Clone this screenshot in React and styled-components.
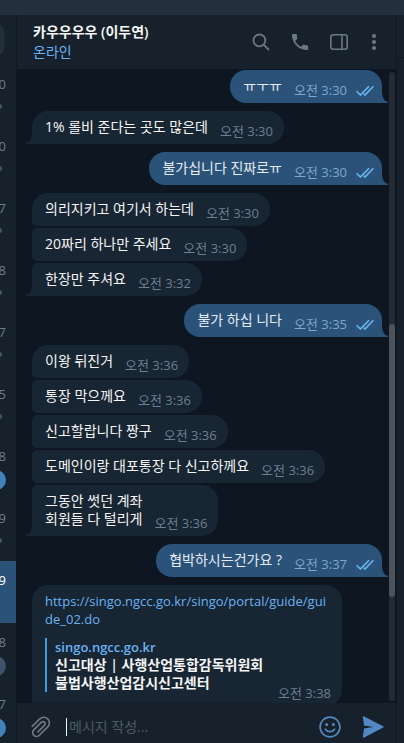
import React from 'react';
import styled, { createGlobalStyle } from 'styled-components';

const GlobalStyle = createGlobalStyle`
  * {
    box-sizing: border-box;
  }
  body {
    margin: 0;
    background: #0e1621;
    color: #f5f5f5;
    font: 14px/18px 'Open Sans', 'Noto Sans CJK KR', sans-serif;
  }
  button {
    display: flex;
    padding: 0;
    border: 0;
    background: none;
    color: inherit;
    cursor: pointer;
  }
  svg {
    display: block;
  }
`;

const Window = styled.div`
  display: flex;
  flex-direction: column;
  height: 100vh;
  overflow: hidden;
`;

const TitleBar = styled.div`
  flex: none;
  height: 15px;
  background: #242f3d;
`;

const Columns = styled.div`
  display: flex;
  flex: 1;
  min-height: 0;
`;

const Sidebar = styled.aside`
  flex: none;
  width: 17px;
  overflow: hidden;
  background: #17212b;
  border-right: 1px solid #101921;
`;

const SearchArea = styled.div`
  display: flex;
  align-items: center;
  height: 50px;
`;

const SearchEdge = styled.div`
  width: 5px;
  height: 30px;
  border-radius: 0 5px 5px 0 / 0 15px 15px 0;
  background: #242f3d;
`;

const DialogRow = styled.div`
  display: flex;
  flex-direction: column;
  align-items: flex-end;
  gap: 5px;
  height: 62px;
  padding: 10px 10px 0 0;
  background: ${props => (props.$active ? '#2b5278' : 'transparent')};
  color: ${props => (props.$active ? '#ffffff' : '#6d7f8f')};
  font-size: 13px;
`;

const Pin = styled.span`
  width: 5px;
  height: 5px;
  margin: 6px 4px 0 0;
  border-radius: 50%;
  background: #455769;
`;

const Badge = styled.span`
  flex: none;
  width: 20px;
  height: 20px;
  border-radius: 10px;
  background: ${props => (props.$muted ? '#3e546a' : '#4082bc')};
`;

const Chat = styled.main`
  display: flex;
  flex: 1;
  flex-direction: column;
  min-width: 0;
`;

const Header = styled.header`
  display: flex;
  flex: none;
  align-items: center;
  justify-content: space-between;
  height: 54px;
  padding: 0 17px 0 16px;
  background: #17212b;
`;

const Name = styled.div`
  font-weight: 600;
`;

const Status = styled.div`
  padding-top: 2px;
  color: #6ab3f3;
`;

const Actions = styled.div`
  display: flex;
  align-items: center;
  gap: 21px;
  color: #6c7883;
`;

const History = styled.div`
  display: flex;
  flex: 1;
  min-height: 0;
  padding-right: 1px;
`;

const Messages = styled.div`
  display: flex;
  flex: 1;
  flex-direction: column;
  gap: 8px;
  min-width: 0;
  padding: 1px 7px 0 15px;
  overflow: hidden;
`;

const Group = styled.div`
  display: flex;
  flex-direction: column;
  flex: none;
  align-items: ${props => (props.$out ? 'flex-end' : 'flex-start')};
  gap: 2px;
`;

const Bubble = styled.div`
  position: relative;
  display: flex;
  flex-direction: ${props => (props.$stacked ? 'column' : 'row')};
  align-items: flex-end;
  gap: ${props => (props.$stacked ? '0' : '12px')};
  max-width: 310px;
  padding: ${props => (props.$out ? '7px 8px 4px 13px' : '7px 11px 4px 13px')};
  border-radius: ${props =>
    props.$out
      ? '16px 16px 0 16px'
      : `${props.$first ? 16 : 5}px 16px 16px ${props.$last ? 0 : 5}px`};
  background: ${props => (props.$out ? '#2b5278' : '#182533')};
  color: ${props => (props.$out ? '#e4ecf2' : '#f5f5f5')};
`;

const TailShape = styled.svg`
  position: absolute;
  bottom: 0;
  ${props => (props.$out ? 'left: 100%;' : 'right: 100%; transform: scaleX(-1);')}
  fill: ${props => (props.$out ? '#2b5278' : '#182533')};
`;

const Text = styled.div`
  padding-bottom: 4px;
  white-space: pre-line;
`;

const Meta = styled.div`
  display: flex;
  flex: none;
  align-items: center;
  gap: 9px;
  margin-top: ${props => (props.$overlap ? '-8px' : '0')};
  color: ${props => (props.$out ? '#7da8d3' : '#6d7f8f')};
  font-size: 13px;
`;

const Link = styled.a`
  align-self: stretch;
  color: #6ab3f3;
  font-size: 13px;
  text-decoration: none;
  word-break: break-all;
`;

const Preview = styled.div`
  align-self: stretch;
  margin-top: 10px;
  padding-left: 8px;
  border-left: 2px solid #429bdb;
  font-weight: 600;
`;

const Site = styled.div`
  color: #6ab3f3;
  font-size: 13px;
`;

const Track = styled.div`
  flex: none;
  width: 6px;
  margin: 3px 0 2px;
  border-radius: 3px;
  background: #242b35;
`;

const Thumb = styled.div`
  position: relative;
  top: 40%;
  height: 43.5%;
  border-radius: 3px;
  background: #4d535b;
`;

const Composer = styled.form`
  display: flex;
  flex: none;
  align-items: center;
  height: 40px;
  padding: 8px 12px 0 13px;
  background: #17212b;
  color: #6c7883;
`;

const MessageInput = styled.input`
  flex: 1;
  min-width: 0;
  height: 18px;
  margin: 0 16px 0 14px;
  padding: 0 0 0 2px;
  border: 0;
  border-left: 1px solid #f5f5f5;
  outline: 0;
  background: none;
  color: #f5f5f5;
  font: inherit;
  &::placeholder {
    color: #4e5a66;
    opacity: 1;
  }
`;

const ComposerActions = styled.div`
  display: flex;
  align-items: center;
  gap: 21px;
  color: #5288c1;
`;

const SidePanel = styled.aside`
  flex: none;
  width: 8px;
  border-left: 1px solid #101921;
  background: #17212b;
`;

const PanelHeader = styled.div`
  height: 43px;
  border-bottom: 1px solid #101921;
`;

const dialogs = [
  { time: '0' },
  { time: '0' },
  { time: '7' },
  { time: '8' },
  { time: '7' },
  { time: '5' },
  { time: '8', badge: true },
  { time: '9' },
  { time: '9', active: true },
  { time: '8', badge: true, muted: true },
  { time: '7', badge: true },
];

const groups = [
  { out: true, items: [['ㅠㅜㅠ', '3:30']] },
  { items: [['1% 롤비 준다는 곳도 많은데', '3:30']] },
  { out: true, items: [['불가십니다 진짜로ㅠ', '3:30']] },
  {
    items: [
      ['의리지키고 여기서 하는데', '3:30'],
      ['20짜리 하나만 주세요', '3:30'],
      ['한장만 주셔요', '3:32'],
    ],
  },
  { out: true, items: [['불가 하십 니다', '3:35']] },
  {
    items: [
      ['이왕 뒤진거', '3:36'],
      ['통장 막으께요', '3:36'],
      ['신고할랍니다 짱구', '3:36'],
      ['도메인이랑 대포통장 다 신고하께요', '3:36'],
      ['그동안 썻던 계좌\n회원들 다 털리게', '3:36'],
    ],
  },
  { out: true, items: [['협박하시는건가요 ?', '3:37']] },
];

const Tail = ({ out }) => (
  <TailShape $out={out} width="6" height="12" viewBox="0 0 6 12" aria-hidden="true">
    <path d="M0 0 C0 6 2 10 6 11 V12 H0 Z" />
  </TailShape>
);

const Checks = () => (
  <svg width="18" height="11" viewBox="0 0 18 11" fill="none" stroke="#6ab8f3" strokeWidth="1.6" aria-hidden="true">
    <path d="M.6 6.2 4.4 10 13 1.2" />
    <path d="M7.6 8.6 9 10 17.4 1.2" />
  </svg>
);

const Message = ({ text, time, out, first, last }) => (
  <Bubble $out={out} $first={first} $last={last}>
    <Text>{text}</Text>
    <Meta $out={out}>
      <span>오전 {time}</span>
      {out && <Checks />}
    </Meta>
    {last && <Tail out={out} />}
  </Bubble>
);

const App = () => {
  return (
    <>
      <GlobalStyle />
      <Window>
        <TitleBar />
        <Columns>
          <Sidebar>
            <SearchArea>
              <SearchEdge />
            </SearchArea>
            {dialogs.map((dialog, i) => (
              <DialogRow key={i} $active={dialog.active}>
                <span>{dialog.time}</span>
                {dialog.badge && <Badge $muted={dialog.muted} />}
                {!dialog.badge && !dialog.active && <Pin />}
              </DialogRow>
            ))}
          </Sidebar>

          <Chat>
            <Header>
              <div>
                <Name>카우우우우 (이두연)</Name>
                <Status>온라인</Status>
              </div>
              <Actions>
                <button type="button" aria-label="검색">
                  <svg width="18" height="18" viewBox="0 0 18 18" fill="none" stroke="currentColor" strokeWidth="1.8">
                    <circle cx="7.4" cy="7.4" r="5.9" />
                    <path d="M11.6 11.6 17 17" />
                  </svg>
                </button>
                <button type="button" aria-label="전화">
                  <svg width="18" height="18" viewBox="2 2 20 20" fill="currentColor">
                    <path d="M6.62 10.79c1.44 2.83 3.76 5.14 6.59 6.59l2.2-2.2c.27-.27.67-.36 1.02-.24 1.12.37 2.33.57 3.57.57.55 0 1 .45 1 1V20c0 .55-.45 1-1 1C10.61 21 3 13.39 3 4c0-.55.45-1 1-1h3.5c.55 0 1 .45 1 1 0 1.25.2 2.45.57 3.57.11.35.03.74-.25 1.02z" />
                  </svg>
                </button>
                <button type="button" aria-label="정보 패널">
                  <svg width="18" height="16" viewBox="0 0 18 16" fill="none" stroke="currentColor" strokeWidth="1.6">
                    <rect x=".8" y=".8" width="16.4" height="14.4" rx="2.4" />
                    <path d="M12 1v14" />
                  </svg>
                </button>
                <button type="button" aria-label="메뉴">
                  <svg width="10" height="18" viewBox="0 0 10 18" fill="currentColor">
                    <circle cx="5" cy="3" r="2.1" />
                    <circle cx="5" cy="9" r="2.1" />
                    <circle cx="5" cy="15" r="2.1" />
                  </svg>
                </button>
              </Actions>
            </Header>

            <History>
              <Messages>
                {groups.map((group, i) => (
                  <Group key={i} $out={group.out}>
                    {group.items.map(([text, time], j) => (
                      <Message
                        key={text}
                        text={text}
                        time={time}
                        out={group.out}
                        first={j === 0}
                        last={j === group.items.length - 1}
                      />
                    ))}
                  </Group>
                ))}
                <Group>
                  <Bubble $first $stacked>
                    <Link href="https://singo.ngcc.go.kr/singo/portal/guide/guide_02.do">
                      https://singo.ngcc.go.kr/singo/portal/guide/guide_02.do
                    </Link>
                    <Preview>
                      <Site>singo.ngcc.go.kr</Site>
                      <div>신고대상 | 사행산업통합감독위원회</div>
                      <div>불법사행산업감시신고센터</div>
                    </Preview>
                    <Meta $overlap>
                      <span>오전 3:38</span>
                    </Meta>
                  </Bubble>
                </Group>
              </Messages>
              <Track>
                <Thumb />
              </Track>
            </History>

            <Composer onSubmit={e => e.preventDefault()}>
              <button type="button" aria-label="파일 첨부">
                <svg width="22" height="22" viewBox="0 0 22 22" fill="none" stroke="currentColor" strokeWidth="1.7" strokeLinecap="round">
                  <path d="M2.2 10.4 9 3.6c2.6-2.6 6.3-2.9 8.7-.7 2.4 2.3 2.2 5.8-.2 8.2l-7.9 7.9c-1.7 1.700-4.2 1.800-5.800.3-1.600-1.600-1.500-4 .2-5.700l7.300-7.300c.9-.9 2.300-1 3.200-.1.9.9.8 2.200-.1 3.100l-6.500 6.500" />
                </svg>
              </button>
              <MessageInput type="text" aria-label="메시지" placeholder="메시지 작성..." />
              <ComposerActions>
                <button type="button" aria-label="이모티콘">
                  <svg width="22" height="22" viewBox="0 0 22 22" fill="none" stroke="currentColor" strokeWidth="1.7" strokeLinecap="round">
                    <circle cx="11" cy="11" r="9.9" />
                    <path d="M6.4 13.2c1.9 3.1 7.3 3.1 9.2 0" />
                    <circle cx="7.6" cy="8.4" r="1.5" fill="currentColor" stroke="none" />
                    <circle cx="14.4" cy="8.4" r="1.5" fill="currentColor" stroke="none" />
                  </svg>
                </button>
                <button type="submit" aria-label="보내기">
                  <svg width="22" height="22" viewBox="0 0 22 22" fill="currentColor">
                    <path d="M.8.8C.7.2 1.2 0 1.7.2L21.2 10.3c.6.3.6 1 0 1.3L1.7 21.7c-.5.3-1 0-.9-.6L2 12.4 11.5 11 2 9.600z" />
                  </svg>
                </button>
              </ComposerActions>
            </Composer>
          </Chat>

          <SidePanel>
            <PanelHeader />
          </SidePanel>
        </Columns>
      </Window>
    </>
  );
};

export default App;
